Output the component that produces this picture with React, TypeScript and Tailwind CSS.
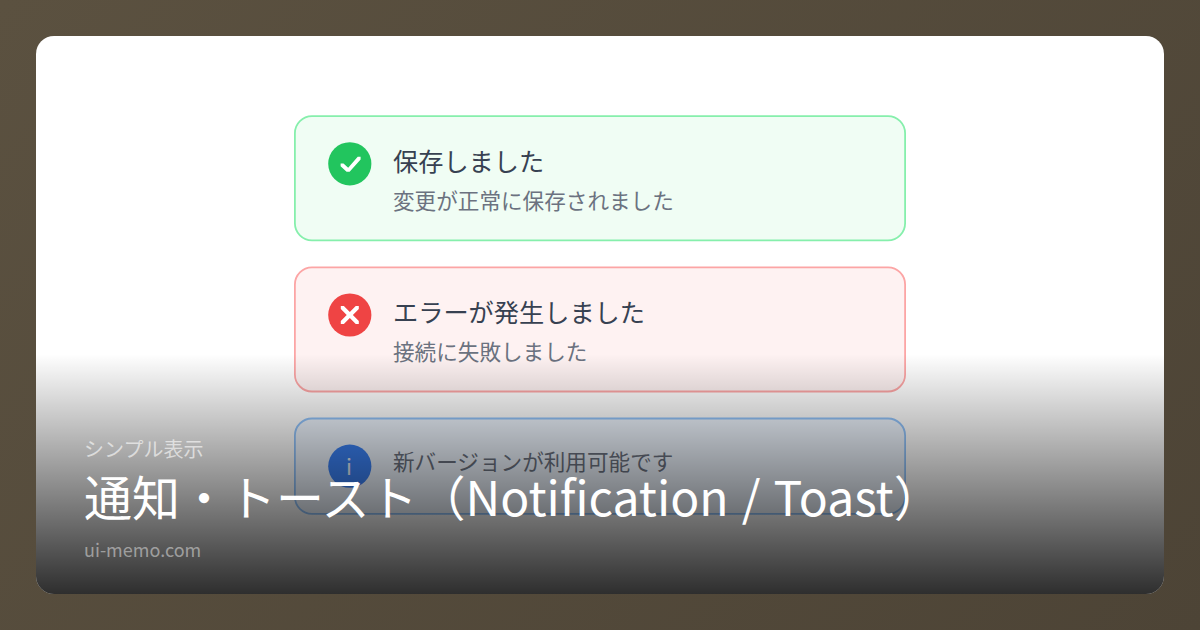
import type { ReactNode } from "react";

type ToastProps = {
  tone: string;
  iconTone: string;
  icon: ReactNode;
  title?: string;
  message: string;
};

function Toast({ tone, iconTone, icon, title, message }: ToastProps) {
  return (
    <div className={`flex items-start gap-3 rounded-[10px] border px-[18px] py-[14px] ${tone}`}>
      <div className={`flex size-6 shrink-0 items-center justify-center rounded-full ${iconTone}`}>{icon}</div>
      <div className="flex flex-col gap-1">
        {title && <div className="text-[14px] leading-5 text-[#374151]">{title}</div>}
        <div className={`text-[12px] leading-4 text-[#6b7280] ${title ? "" : "py-px"}`}>{message}</div>
      </div>
    </div>
  );
}

function CheckMark() {
  return (
    <svg viewBox="0 0 24 24" className="size-6" fill="white">
      <path d="M6.9 11.8H8.5L11.1 14.2L16.4 8.1H18V9.6L11.9 16.4H10.2L6.9 13.3Z" />
    </svg>
  );
}

function CrossMark() {
  return (
    <svg viewBox="0 0 24 24" className="size-6" fill="white">
      <path d="M7 7H8.7L12 10.3L15.3 7H17V8.7L13.7 12L17 15.3V17H15.3L12 13.7L8.7 17H7V15.3L10.3 12L7 8.7Z" />
    </svg>
  );
}

export default function App() {
  return (
    <div className="flex h-[630px] w-[1200px] bg-linear-135 from-[#5b5140] to-[#4d4436] p-9 font-['Noto_Sans_CJK_JP',sans-serif]">
      <div className="relative flex flex-1 items-center justify-center overflow-hidden rounded-[18px] bg-white">
        <div className="flex w-[340px] shrink-0 scale-[1.8] flex-col gap-[14px]">
          <Toast
            tone="h-[70px] border-[#86efac] bg-[#f0fdf4]"
            iconTone="bg-[#22c55e]"
            icon={<CheckMark />}
            title="保存しました"
            message="変更が正常に保存されました"
          />
          <Toast
            tone="h-[70px] border-[#fca5a5] bg-[#fef2f2]"
            iconTone="bg-[#ef4444]"
            icon={<CrossMark />}
            title="エラーが発生しました"
            message="接続に失敗しました"
          />
          <Toast
            tone="h-[54px] border-[#93c5fd] bg-[#eff6ff]"
            iconTone="bg-[#3b82f6]"
            icon={<span className="pr-px text-[12px] leading-none text-white/90">i</span>}
            message="新バージョンが利用可能です"
          />
        </div>
        <div className="absolute inset-x-0 bottom-0 flex h-[240px] flex-col justify-end bg-[linear-gradient(to_bottom,rgba(0,0,0,0),rgba(0,0,0,0.82))] px-12 pb-[34px]">
          <div className="text-[20px] leading-6 text-white/60">シンプル表示</div>
          <div className="mt-[5px] text-[48px] leading-[58px] [word-spacing:2.4px] whitespace-nowrap text-white">
            通知・トースト（Notification / Toast）
          </div>
          <div className="mt-[14px] text-[18px] leading-[22px] text-white/45">ui-memo.com</div>
        </div>
      </div>
    </div>
  );
}
